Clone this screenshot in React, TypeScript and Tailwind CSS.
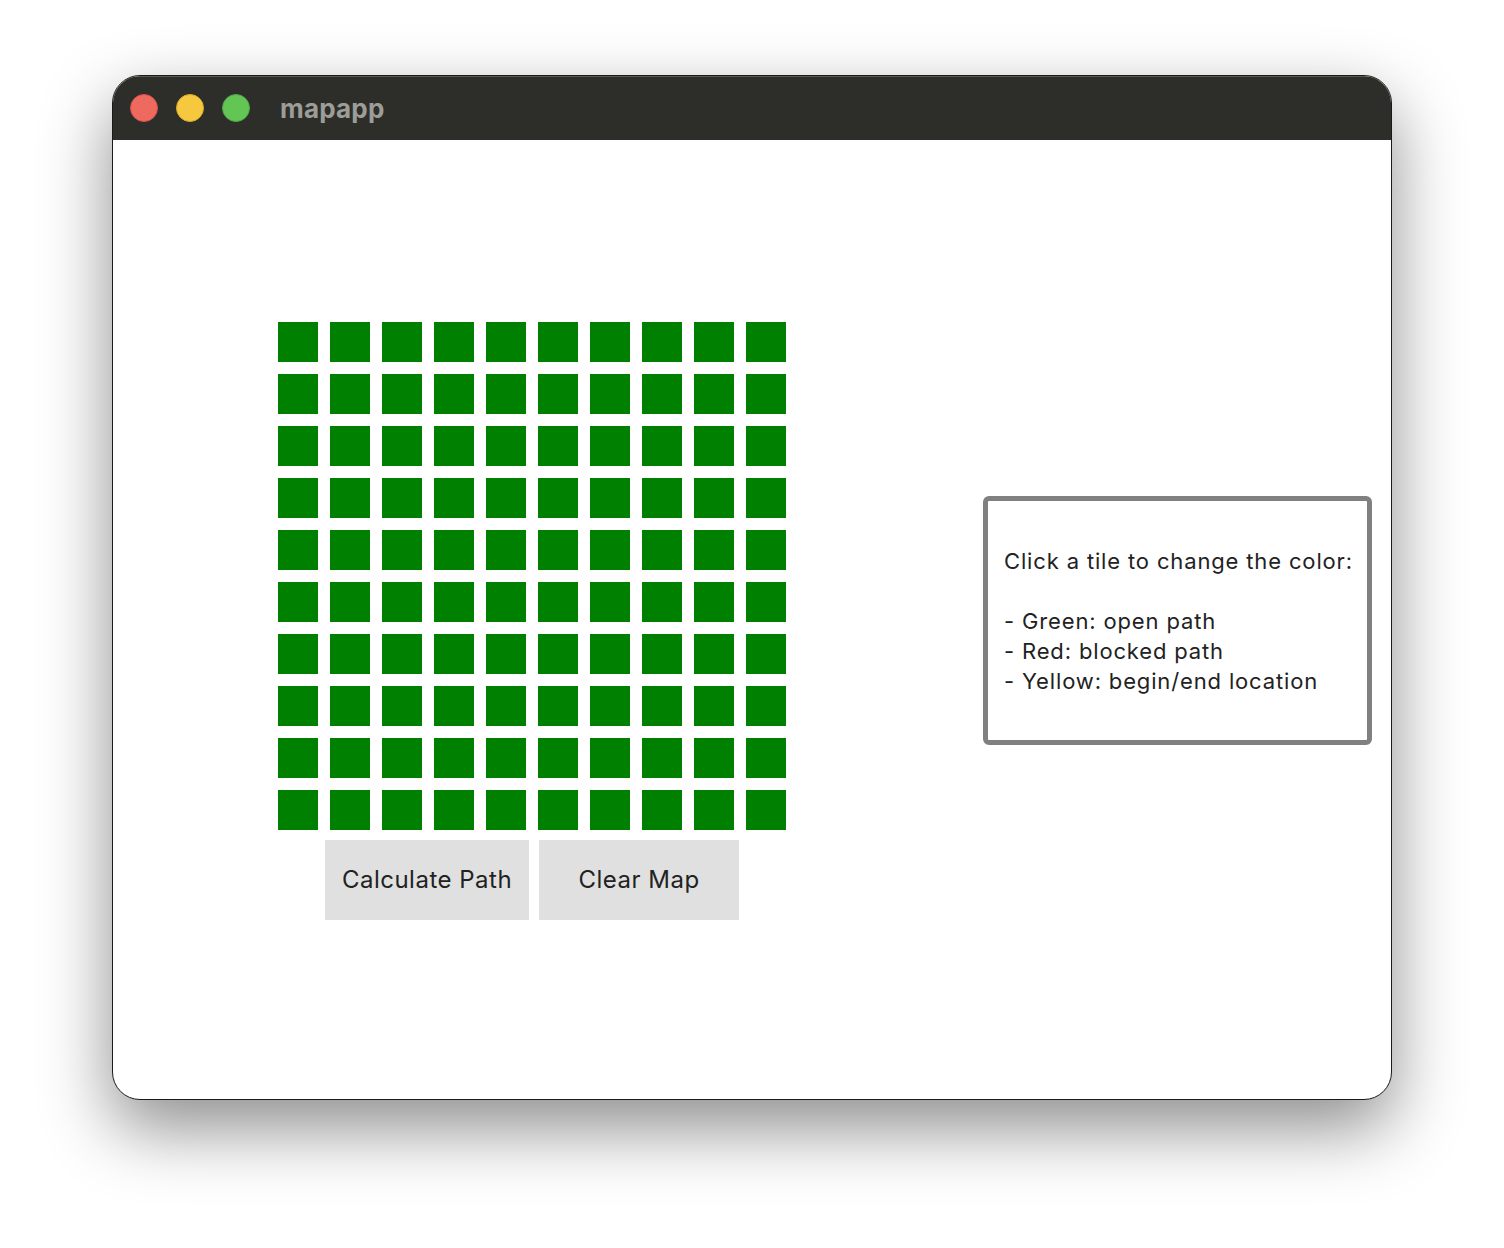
import React from 'react';

const rows = Array.from({ length: 10 });
const cols = Array.from({ length: 10 });

function TrafficLights() {
  return (
    <div className="flex items-center gap-[18px]">
      <span className="w-[28px] h-[28px] rounded-full bg-[#ee6a5f] border border-[#d5524a]" />
      <span className="w-[28px] h-[28px] rounded-full bg-[#f5c83f] border border-[#d9ab2b]" />
      <span className="w-[28px] h-[28px] rounded-full bg-[#62c554] border border-[#4ea944]" />
    </div>
  );
}

export default function App() {
  return (
    <div
      className="w-[1504px] h-[1248px] bg-white pt-[75px] pl-[112px]"
      style={{ fontFamily: 'Inter, "Noto Sans", "Liberation Sans", sans-serif' }}
    >
      <div className="w-[1280px] h-[1025px] rounded-[28px] overflow-hidden bg-white border border-[#1a1a1a] shadow-[0_28px_70px_rgba(0,0,0,0.45)] flex flex-col">
        {/* title bar */}
        <div className="h-[64px] bg-[#2d2d29] flex items-center pl-[17px] gap-[30px] shrink-0 shadow-[inset_0_1px_0_rgba(255,255,255,0.2)]">
          <TrafficLights />
          <span className="text-[26px] font-bold text-[#9d9d97] tracking-[0.2px] mt-[1px]">mapapp</span>
        </div>

        {/* content */}
        <div className="flex-1 flex items-center pl-[165px] pt-[2px]">
          <div className="flex flex-col items-center">
            <div className="grid grid-cols-10 gap-[12px]">
              {rows.map((_, r) =>
                cols.map((_, c) => (
                  <div key={`${r}-${c}`} className="w-[40px] h-[40px] bg-[#008000] cursor-pointer" />
                ))
              )}
            </div>
            <div className="flex gap-[10px] mt-[10px]">
              <button className="w-[204px] h-[80px] bg-[#e0e0e0] text-[24px] text-[#222] tracking-[0.5px]">Calculate Path</button>
              <button className="w-[200px] h-[80px] bg-[#e0e0e0] text-[24px] text-[#222] tracking-[0.5px]">Clear Map</button>
            </div>
          </div>

          <div className="ml-[197px] w-[389px] h-[249px] border-[5px] border-[#808080] rounded-[6px] flex flex-col justify-center pl-[16px] text-[22px] leading-[30px] text-[#222] tracking-[0.85px]">
            <p>Click a tile to change the color:</p>
            <p>&nbsp;</p>
            <p>- Green: open path</p>
            <p>- Red: blocked path</p>
            <p>- Yellow: begin/end location</p>
          </div>
        </div>
      </div>
    </div>
  );
}
